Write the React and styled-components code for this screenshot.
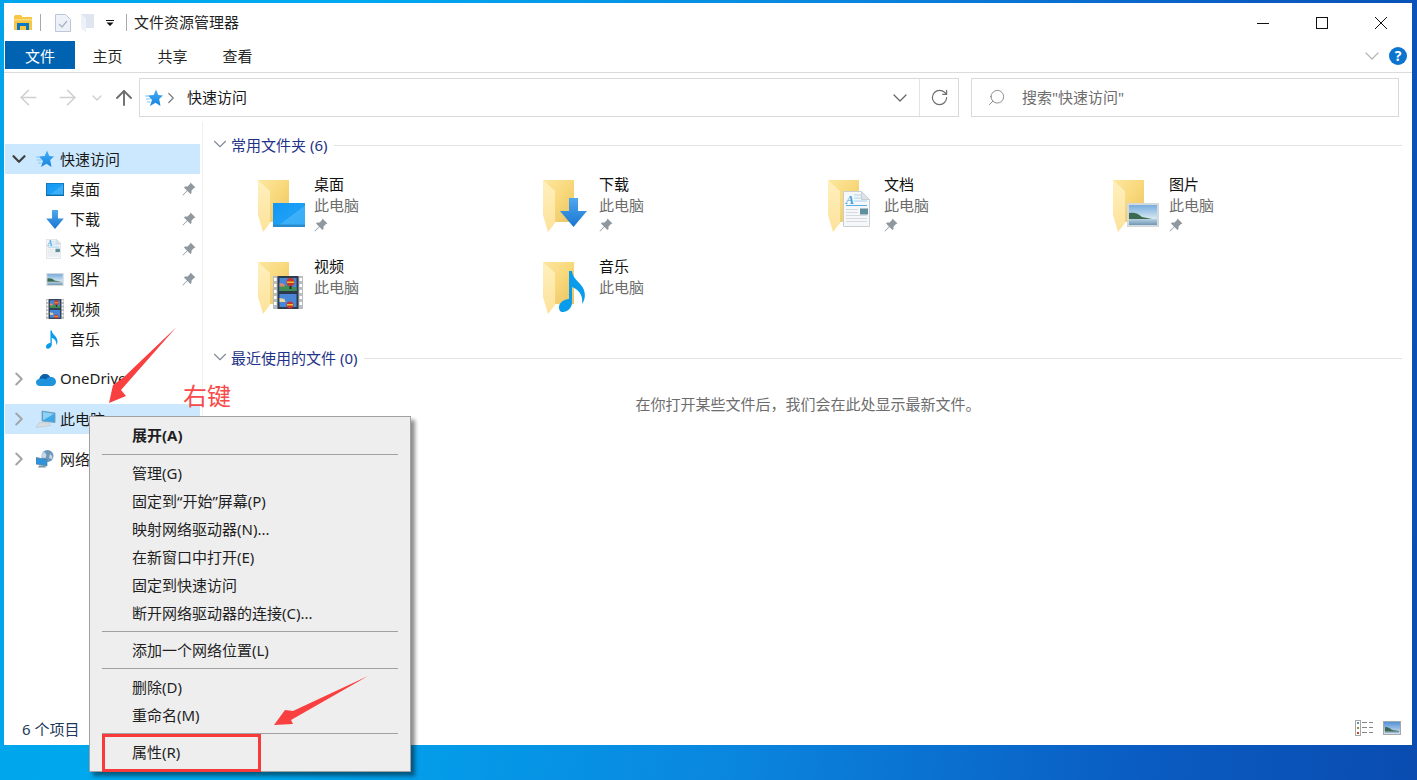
import React from 'react';
import styled, { createGlobalStyle } from 'styled-components';
import { ArrowLeft, ArrowRight, ArrowUp, ChevronDown, ChevronRight, RotateCw, Search } from 'lucide-react';

const GlobalStyle = createGlobalStyle`
  html, body {
    margin: 0;
    padding: 0;
    overflow: hidden;
  }
  * {
    box-sizing: border-box;
  }
  svg {
    flex: none;
  }
  body {
    font-family: "Noto Sans", "Noto Sans CJK SC", sans-serif;
    font-size: 15px;
    color: #1a1a1a;
  }
`;

const Desktop = styled.div`
  position: relative;
  width: 1417px;
  height: 780px;
  padding: 3px 5px 35px 4px;
  background: linear-gradient(98deg, #00a4ea 0%, #00aaf0 22%, #0a86de 55%, #0a5cc2 82%, #0a4cb0 100%);
`;

const Window = styled.div`
  display: flex;
  flex-direction: column;
  height: 100%;
  background: #fff;
`;

const TitleBar = styled.div`
  display: flex;
  align-items: center;
  height: 37px;
  padding: 2px 2px 0 10px;
  flex: none;
`;

const QuickSep = styled.span`
  width: 1px;
  height: 17px;
  background: #a9a9a9;
  margin: ${({ $margin }) => $margin};
`;

const TitleText = styled.span`
  line-height: 20px;
  margin-bottom: 2px;
  color: #1f1f1f;
`;

const WindowButtons = styled.div`
  display: flex;
  margin-left: auto;
`;

const WindowButton = styled.div`
  display: flex;
  align-items: center;
  justify-content: center;
  width: 59px;
  height: 30px;
`;

const RibbonTabs = styled.div`
  display: flex;
  align-items: flex-start;
  height: 33px;
  padding: 1px 5px 0 1px;
  border-bottom: 1px solid #dadbdc;
  flex: none;
`;

const Tab = styled.div`
  display: flex;
  align-items: center;
  justify-content: center;
  width: ${({ $active }) => ($active ? '70px' : '65px')};
  height: 28px;
  background: ${({ $active }) => ($active ? '#0063b1' : 'transparent')};
  color: ${({ $active }) => ($active ? '#fff' : '#262626')};
`;

const RibbonRight = styled.div`
  display: flex;
  align-items: center;
  gap: 5px;
  margin-left: auto;
  height: 30px;
`;

const HelpBadge = styled.span`
  display: flex;
  align-items: center;
  justify-content: center;
  width: 18px;
  height: 18px;
  border-radius: 50%;
  background: #0a74ce;
  color: #fff;
  font-size: 14px;
  font-weight: 700;
  line-height: 18px;
`;

const NavBar = styled.div`
  display: flex;
  align-items: center;
  height: 49px;
  padding: 5px 13px 5px 0;
  flex: none;
`;

const NavButtons = styled.div`
  display: flex;
  align-items: center;
  width: 135px;
  flex: none;
`;

const NavSlot = styled.span`
  display: flex;
  align-items: center;
  justify-content: center;
  flex: none;
  width: ${({ $w }) => $w}px;
  margin-left: ${({ $ml }) => $ml || 0}px;
`;

const AddressBox = styled.div`
  display: flex;
  align-items: center;
  flex: 1;
  height: 39px;
  border: 1px solid #d9d9d9;
  padding-left: 5px;
`;

const Crumb = styled.span`
  color: #1a1a1a;
  margin: 0 0 2px 10px;
`;

const AddressEnd = styled.div`
  display: flex;
  align-items: center;
  margin-left: auto;
  height: 100%;
`;

const AddressSep = styled.span`
  width: 1px;
  height: 100%;
  background: #e3e3e3;
`;

const SearchBox = styled.div`
  display: flex;
  align-items: center;
  width: 428px;
  height: 39px;
  margin-left: 12px;
  padding-left: 15px;
  border: 1px solid #d9d9d9;
  color: #6d6d6d;
`;

const SearchText = styled.span`
  margin: 0 0 2px 16px;
`;

const Body = styled.div`
  display: flex;
  flex: 1;
  min-height: 0;
`;

const Sidebar = styled.nav`
  width: 199px;
  flex: none;
  padding: 22px 2px 0 1px;
  border-right: 1px solid #f0f0f0;
`;

const TreeGroup = styled.div`
  margin-top: ${({ $first }) => ($first ? '0' : '10px')};
`;

const TreeRow = styled.div`
  display: flex;
  align-items: center;
  height: 30px;
  padding-left: ${({ $child }) => ($child ? '41px' : '0')};
  padding-right: 4px;
  background: ${({ $selected }) => ($selected ? '#cce8ff' : 'transparent')};
  color: #1a1a1a;
`;

const TreeLabel = styled.span`
  margin-bottom: 2px;
`;

const Toggle = styled.span`
  display: flex;
  align-items: center;
  justify-content: center;
  width: 27px;
  flex: none;
`;

const TreeIcon = styled.span`
  display: flex;
  align-items: center;
  flex: none;
  width: ${({ $child }) => ($child ? '24px' : '28px')};
  padding-left: ${({ $child }) => ($child ? '0' : '4px')};
`;

const PinSlot = styled.span`
  display: flex;
  margin-left: auto;
`;

const Content = styled.main`
  flex: 1;
  min-width: 0;
  padding: 12px 10px 0 11px;
`;

const SectionHead = styled.div`
  display: flex;
  align-items: center;
  height: 20px;
  margin-top: ${({ $mt }) => $mt || 0}px;
  color: #1e3287;
`;

const SectionChevron = styled.span`
  display: flex;
  justify-content: center;
  width: 12px;
  margin-right: 5px;
  flex: none;
`;

const SectionLine = styled.span`
  flex: 1;
  height: 1px;
  margin: 2px 0 0 7px;
  background: #e2e2e2;
`;

const FolderGrid = styled.div`
  display: grid;
  grid-template-columns: repeat(4, 285px);
  grid-auto-rows: 82px;
  margin-top: 20px;
  padding-left: 29px;
`;

const FolderItem = styled.div`
  display: flex;
`;

const FolderThumb = styled.div`
  position: relative;
  width: 48px;
  height: 52px;
  margin: 6px 8px 0 15px;
  flex: none;
`;

const FolderBadge = styled.div`
  position: absolute;
  left: ${({ $x }) => $x}px;
  top: ${({ $y }) => $y}px;
  display: flex;
`;

const FolderText = styled.div`
  display: flex;
  flex-direction: column;
  line-height: 21px;
`;

const FolderName = styled.span`
  color: #111;
`;

const FolderSub = styled.span`
  color: #6d6d6d;
`;

const FolderPin = styled.span`
  display: flex;
  margin-top: 2px;
`;

const EmptyNote = styled.div`
  margin-top: 27px;
  text-align: center;
  line-height: 21px;
  color: #6d6d6d;
`;

const StatusBar = styled.div`
  display: flex;
  align-items: center;
  height: 30px;
  padding: 0 11px 4px 18px;
  flex: none;
  color: #1e395b;
`;

const StatusViews = styled.div`
  display: flex;
  align-items: center;
  gap: 10px;
  margin-left: auto;
`;

const ContextMenu = styled.div`
  position: absolute;
  left: 89px;
  top: 416px;
  width: 322px;
  padding: 4px 12px 6px 1px;
  background: #eeeeee;
  border: 1px solid #a0a0a0;
  box-shadow: 4px 4px 4px rgba(0, 0, 0, 0.45);
`;

const MenuItem = styled.div`
  display: flex;
  align-items: center;
  height: 28px;
  padding-left: 41px;
  padding-bottom: ${({ $bold }) => ($bold ? '2px' : '0')};
  color: #1f1f1f;
  font-weight: ${({ $bold }) => ($bold ? 700 : 400)};
  white-space: nowrap;
`;

const MenuSep = styled.div`
  height: 1px;
  margin: 5px 0 3px 11px;
  background: #a0a0a0;
`;

const Annotations = styled.svg`
  position: absolute;
  left: 0;
  top: 0;
  pointer-events: none;
`;

const RedLabel = styled.div`
  position: absolute;
  left: 183px;
  top: 377px;
  font-family: "Noto Sans CJK SC", sans-serif;
  font-size: 24px;
  line-height: 36px;
  color: #f94a4a;
`;

const RedBox = styled.div`
  position: absolute;
  left: 102px;
  top: 734px;
  width: 159px;
  height: 38px;
  border: 3px solid #f93a3a;
`;

const AppFolderIcon = () => (
  <svg width="18" height="16" viewBox="0 0 18 16">
    <path d="M0 1.500 1 0h6l1.500 2H18v13H0Z" fill="#f6c644" />
    <path d="M0 4h18v1.500H0Z" fill="#fbdd80" />
    <path d="M3 15V8h12v7h-3v-4H6v4Z" fill="#0a76c4" />
  </svg>
);

const QuickCheckIcon = () => (
  <svg width="16" height="18" viewBox="0 0 16 18">
    <path d="M.5.5h10l5 5v12H.5Z" fill="#eef2f8" stroke="#bcc8da" />
    <path d="m4 10 3 3 5-6" fill="none" stroke="#a9b5c6" strokeWidth="1.400" />
  </svg>
);

const QuickFolderIcon = () => (
  <svg width="13" height="18" viewBox="0 0 13 18">
    <path d="M0 0h13v14H5v4L0 14Z" fill="#dfe6f1" />
    <path d="M0 0 5 4v14L0 14Z" fill="#eef2f8" />
  </svg>
);

const QuickDropIcon = () => (
  <svg width="8" height="6" viewBox="0 0 8 6">
    <path d="M0 0h8v1H0ZM.5 2.500h7L4 6Z" fill="#111" />
  </svg>
);

const MinimizeIcon = () => (
  <svg width="12" height="12" viewBox="0 0 12 12">
    <path d="M0 6.500h12" stroke="#111" />
  </svg>
);

const MaximizeIcon = () => (
  <svg width="12" height="12" viewBox="0 0 12 12">
    <rect x=".5" y=".5" width="11" height="11" fill="none" stroke="#111" />
  </svg>
);

const CloseIcon = () => (
  <svg width="12" height="12" viewBox="0 0 12 12">
    <path d="M0 0l12 12M12 0 0 12" stroke="#111" />
  </svg>
);

const StarIcon = () => (
  <svg width="18" height="18" viewBox="0 0 18 18">
    <defs>
      <linearGradient id="starFill" x1="0" y1="0" x2="0" y2="1">
        <stop offset="0" stopColor="#45b0f8" />
        <stop offset="1" stopColor="#1583de" />
      </linearGradient>
    </defs>
    <path d="M11 .5 13.300 6l4.700.4-3.800 3.600 1.300 7-5-3.300L5 17l2-6-4-4.400L8.700 6Z" fill="url(#starFill)" />
    <path d="M0 7h4M1 10h4.500M2 13h3.500" stroke="#7cc7f7" strokeWidth="1.200" />
  </svg>
);

const PinIcon = () => (
  <svg width="14" height="14" viewBox="0 0 14 14">
    <path d="M8.500.5l5 5-1.500.5-2.500 2.500V11l-1 1-3-3-4.500 4.500L.5 13 5 8.500l-3-3 1-1h2.500L8 2Z" fill="#8f989f" />
  </svg>
);

const DesktopIcon = ({ width = 18, height = 13, outline }) => (
  <svg width={width} height={height} viewBox="0 0 32 24">
    <defs>
      <linearGradient id="deskFill" x1="0" y1="0" x2="1" y2="1">
        <stop offset="0" stopColor="#1196f3" />
        <stop offset="0.55" stopColor="#1ea0f6" />
        <stop offset="0.56" stopColor="#3cb0f8" />
        <stop offset="1" stopColor="#35adf7" />
      </linearGradient>
    </defs>
    <rect width="32" height="24" fill="url(#deskFill)" stroke={outline ? '#0d6aa8' : 'none'} strokeWidth={outline ? 2 : 0} />
    <rect y="21.500" width="32" height="2.500" fill={outline ? '#0d6aa8' : '#2a8ccc'} />
  </svg>
);

const DownloadIcon = ({ width = 18, height = 19 }) => (
  <svg width={width} height={height} viewBox="0 0 27 29">
    <defs>
      <linearGradient id="downFill" x1="0" y1="0" x2="0" y2="1">
        <stop offset="0" stopColor="#4fa8ef" />
        <stop offset="1" stopColor="#1a75cf" />
      </linearGradient>
    </defs>
    <path d="M9 0h9v13h9L13.500 29 0 13h9Z" fill="url(#downFill)" />
  </svg>
);

const DocIcon = ({ width = 15, height = 20 }) => (
  <svg width={width} height={height} viewBox="0 0 27 36">
    <path d="M.5.5h18l8 8v27H.5Z" fill="#f5f7f9" stroke="#c9ced3" />
    <path d="M18.500.5v8h8Z" fill="#dfe3e7" stroke="#c9ced3" />
    <text x="2.500" y="12.500" fontFamily="Liberation Serif, serif" fontStyle="italic" fontWeight="700" fontSize="13" fill="#3f9fe0">A</text>
    <path d="M11 4h7M11 7h8M11 10h13" stroke="#a9d2ee" />
    <path d="M3 14.500h21" stroke="#56aee6" />
    <path d="M3 18.500h12M3 21.500h12M3 24.500h21M3 27.500h21M3 30.500h21" stroke="#d5dade" />
    <rect x="17" y="17.500" width="8" height="6" fill="#5f8f9c" />
  </svg>
);

const PictureIcon = ({ width = 18, height = 13 }) => (
  <svg width={width} height={height} viewBox="0 0 32 24">
    <defs>
      <linearGradient id="skyFill" x1="0" y1="0" x2="0" y2="1">
        <stop offset="0" stopColor="#6fa8dc" />
        <stop offset="0.7" stopColor="#dcecf4" />
      </linearGradient>
      <linearGradient id="waterFill" x1="0" y1="0" x2="0" y2="1">
        <stop offset="0" stopColor="#b9d0de" />
        <stop offset="1" stopColor="#6f98b8" />
      </linearGradient>
    </defs>
    <rect x="1" y="1" width="30" height="22" fill="url(#skyFill)" stroke="#d5d9dc" strokeWidth="2" />
    <path d="M2 10c5-1 9 0 13 4 5 1 10 2 15 3H2Z" fill="#3a6a50" />
    <rect x="2" y="16" width="28" height="6" fill="url(#waterFill)" />
  </svg>
);

const FilmIcon = ({ width = 18, height = 20 }) => (
  <svg width={width} height={height} viewBox="0 0 30 33">
    <rect width="30" height="33" fill="#b9bdbf" />
    <rect x="4.500" width="21" height="33" fill="#2c3a4c" />
    <path d="M1 2h2.500v3H1ZM1 8h2.500v3H1ZM1 14h2.500v3H1ZM1 20h2.500v3H1ZM1 26h2.500v3H1ZM26.500 2H29v3h-2.500ZM26.500 8H29v3h-2.500ZM26.500 14H29v3h-2.500ZM26.500 20H29v3h-2.500ZM26.500 26H29v3h-2.500Z" fill="#fff" />
    <rect x="6.500" y="2" width="17" height="13" fill="#4a86d8" />
    <rect x="6.500" y="18" width="17" height="13" fill="#4a86d8" />
    <path d="M6.500 10.500 12 9l11.500 2.500V15h-17Z" fill="#3f8f55" />
    <path d="M6.500 7 11 8l1 2.500H6.500Z" fill="#d98a70" />
    <circle cx="17.500" cy="6" r="4" fill="#c9332b" />
    <path d="M14 5.500h7V7h-7Z" fill="#e8c030" />
    <path d="M16.500 10h2v3h-2Z" fill="#2c2c2c" />
    <circle cx="17" cy="29" r="3.500" fill="#c9332b" />
    <path d="M14 28h6v1.500h-6Z" fill="#e8c030" />
    <path d="M6.500 22l5 1 1 3h-6Z" fill="#e7d9a0" />
  </svg>
);

const NoteIcon = ({ width = 12, height = 19 }) => (
  <svg width={width} height={height} viewBox="0 0 27 42">
    <path d="M10 1h3c1 7 5 9 9 14 5 6 5 14 1 19 1-7-1-13-10-17v16c0 5-5 9-9 9-3 0-4-2-4-5 0-4 5-8 10-8Z" fill="#0a9cec" />
  </svg>
);

const OneDriveIcon = () => (
  <svg width="20" height="13" viewBox="0 0 20 13">
    <path d="M4 13C1.500 13 0 11.300 0 9.400 0 7.500 1.400 6 3.300 6 4 3 6.300 1 9 1c2.200 0 4 1.200 5 3 3-.5 6 1.500 6 4.800 0 2.500-2 4.200-4.200 4.200Z" fill="#1f94dc" />
    <path d="M3.300 6C4 3 6.300 1 9 1c2.200 0 4 1.200 5 3-2 .2-3.300 1.100-4 2.500-2.500-1.300-4.800-1-6.700-.5Z" fill="#0f5fa8" />
  </svg>
);

const ComputerIcon = () => (
  <svg width="20" height="18" viewBox="0 0 20 18">
    <path d="M6 1l13 2v9.500L6 11Z" fill="#3fa9e8" stroke="#7d97a8" strokeWidth=".8" />
    <path d="M7 2l11 1.800L8 9.800l-1-.1Z" fill="#8fd0f5" />
    <path d="M3 12.500l10 .5 1.500 2.500L0 17.500Z" fill="#d8dde0" stroke="#bcc3c8" strokeWidth=".6" />
  </svg>
);

const NetworkIcon = () => (
  <svg width="18" height="18" viewBox="0 0 18 18">
    <circle cx="11.500" cy="6" r="6" fill="#6d97b8" />
    <path d="M8 2c2 1 3 3 2 5s-3 1-4 0 0-4 2-5ZM14 4c2 1 3 3 2 5l-3-1Z" fill="#c7d9e6" />
    <path d="M0 7.500 11 9.500V16L0 14Z" fill="#2d93dc" stroke="#5a7f9a" strokeWidth=".7" />
    <path d="M3 15.500h6l1 2H2Z" fill="#7b96a8" />
  </svg>
);

const DetailsViewIcon = () => (
  <svg width="18" height="16" viewBox="0 0 18 16">
    <rect x=".5" y=".5" width="5" height="15" fill="#fff" stroke="#a7a7a7" />
    <rect x="2" y="2" width="2" height="2" fill="#5f93a8" />
    <rect x="2" y="7" width="2" height="2" fill="#8f8f40" />
    <rect x="2" y="12" width="2" height="2" fill="#b5492f" />
    <path d="M7 2.500h5M14 2.500h4M7 7.500h5M14 7.500h4M7 12.500h5M14 12.500h4" stroke="#858585" />
  </svg>
);

const LargeViewIcon = () => (
  <svg width="18" height="14" viewBox="0 0 18 14">
    <defs>
      <linearGradient id="viewSky" x1="0" y1="0" x2="0" y2="1">
        <stop offset="0" stopColor="#4f8fd6" />
        <stop offset="1" stopColor="#d4e6f2" />
      </linearGradient>
    </defs>
    <rect x=".5" y=".5" width="17" height="13" fill="url(#viewSky)" stroke="#a7a7a7" />
    <path d="M2 6c3 0 5 1 7 3l7 1v2H2Z" fill="#41664f" />
    <path d="M2 10.500h14V12H2Z" fill="#9ab8cc" />
  </svg>
);

const FolderIcon = () => (
  <svg width="32" height="52" viewBox="0 0 32 52">
    <defs>
      <linearGradient id="folderBack" x1="0" y1="0" x2="1" y2="1">
        <stop offset="0" stopColor="#fce6a0" />
        <stop offset="0.5" stopColor="#f8d87a" />
        <stop offset="1" stopColor="#e9c262" />
      </linearGradient>
      <linearGradient id="folderFlap" x1="0" y1="0" x2="0" y2="1">
        <stop offset="0" stopColor="#fff0bd" />
        <stop offset="1" stopColor="#fde29a" />
      </linearGradient>
    </defs>
    <path d="M0 0h31v42H12Z" fill="url(#folderBack)" />
    <path d="M0 0l12 11v32l-7 9-5-17Z" fill="url(#folderFlap)" />
  </svg>
);

const navItems = [
  { label: '桌面', icon: <DesktopIcon outline />, pin: true },
  { label: '下载', icon: <DownloadIcon />, pin: true },
  { label: '文档', icon: <DocIcon />, pin: true },
  { label: '图片', icon: <PictureIcon />, pin: true },
  { label: '视频', icon: <FilmIcon /> },
  { label: '音乐', icon: <NoteIcon /> },
];

const folders = [
  { name: '桌面', pin: true, x: 15, y: 23, badge: <DesktopIcon width={32} height={24} /> },
  { name: '下载', pin: true, x: 17, y: 18, badge: <DownloadIcon width={27} height={29} /> },
  { name: '文档', pin: true, x: 15, y: 11, badge: <DocIcon width={27} height={36} /> },
  { name: '图片', pin: true, x: 14, y: 23, badge: <PictureIcon width={32} height={24} /> },
  { name: '视频', x: 15, y: 14, badge: <FilmIcon width={30} height={33} /> },
  { name: '音乐', x: 16, y: 8, badge: <NoteIcon width={27} height={42} /> },
];

const App = () => (
  <Desktop>
    <GlobalStyle />
    <Window>
      <TitleBar>
        <AppFolderIcon />
        <QuickSep $margin="0 14px 0 8px" />
        <QuickCheckIcon />
        <NavSlot $w={13} $ml={10}><QuickFolderIcon /></NavSlot>
        <NavSlot $w={8} $ml={12}><QuickDropIcon /></NavSlot>
        <QuickSep $margin="0 7px 0 12px" />
        <TitleText>文件资源管理器</TitleText>
        <WindowButtons>
          <WindowButton><MinimizeIcon /></WindowButton>
          <WindowButton><MaximizeIcon /></WindowButton>
          <WindowButton><CloseIcon /></WindowButton>
        </WindowButtons>
      </TitleBar>
      <RibbonTabs>
        <Tab $active>文件</Tab>
        <Tab>主页</Tab>
        <Tab>共享</Tab>
        <Tab>查看</Tab>
        <RibbonRight>
          <ChevronDown size={24} color="#b5b5b5" strokeWidth={1.2} />
          <HelpBadge>?</HelpBadge>
        </RibbonRight>
      </RibbonTabs>
      <NavBar>
        <NavButtons>
          <NavSlot $w={17} $ml={16}><ArrowLeft size={25} color="#cfcfcf" strokeWidth={1.5} /></NavSlot>
          <NavSlot $w={17} $ml={22}><ArrowRight size={25} color="#cfcfcf" strokeWidth={1.5} /></NavSlot>
          <NavSlot $w={11} $ml={15}><ChevronDown size={16} color="#cfcfcf" strokeWidth={2} /></NavSlot>
          <NavSlot $w={17} $ml={13}><ArrowUp size={24} color="#6e6e6e" strokeWidth={1.9} /></NavSlot>
        </NavButtons>
        <AddressBox>
          <StarIcon />
          <NavSlot $w={12} $ml={2}><ChevronRight size={18} color="#7d7d7d" strokeWidth={1.6} /></NavSlot>
          <Crumb>快速访问</Crumb>
          <AddressEnd>
            <NavSlot $w={39}><ChevronDown size={24} color="#666" strokeWidth={1.3} /></NavSlot>
            <AddressSep />
            <NavSlot $w={38}><RotateCw size={19} color="#6e6e6e" strokeWidth={1.5} /></NavSlot>
          </AddressEnd>
        </AddressBox>
        <SearchBox>
          <Search size={19} color="#808080" strokeWidth={1.1} style={{ transform: 'scaleX(-1)' }} />
          <SearchText>搜索"快速访问"</SearchText>
        </SearchBox>
      </NavBar>
      <Body>
        <Sidebar>
          <TreeGroup $first>
            <TreeRow $selected>
              <Toggle><ChevronDown size={22} color="#3f3f3f" strokeWidth={2.4} /></Toggle>
              <TreeIcon><StarIcon /></TreeIcon>
              <TreeLabel>快速访问</TreeLabel>
            </TreeRow>
            {navItems.map((item) => (
              <TreeRow $child key={item.label}>
                <TreeIcon $child>{item.icon}</TreeIcon>
                <TreeLabel>{item.label}</TreeLabel>
                {item.pin && <PinSlot><PinIcon /></PinSlot>}
              </TreeRow>
            ))}
          </TreeGroup>
          <TreeGroup>
            <TreeRow>
              <Toggle><ChevronRight size={22} color="#a6a6a6" strokeWidth={2.2} /></Toggle>
              <TreeIcon><OneDriveIcon /></TreeIcon>
              <TreeLabel>OneDrive</TreeLabel>
            </TreeRow>
          </TreeGroup>
          <TreeGroup>
            <TreeRow $selected>
              <Toggle><ChevronRight size={22} color="#a6a6a6" strokeWidth={2.2} /></Toggle>
              <TreeIcon><ComputerIcon /></TreeIcon>
              <TreeLabel>此电脑</TreeLabel>
            </TreeRow>
          </TreeGroup>
          <TreeGroup>
            <TreeRow>
              <Toggle><ChevronRight size={22} color="#a6a6a6" strokeWidth={2.2} /></Toggle>
              <TreeIcon><NetworkIcon /></TreeIcon>
              <TreeLabel>网络</TreeLabel>
            </TreeRow>
          </TreeGroup>
        </Sidebar>
        <Content>
          <SectionHead>
            <SectionChevron><ChevronDown size={22} color="#808a96" strokeWidth={1.2} /></SectionChevron>
            常用文件夹 (6)
            <SectionLine />
          </SectionHead>
          <FolderGrid>
            {folders.map((folder) => (
              <FolderItem key={folder.name}>
                <FolderThumb>
                  <FolderIcon />
                  <FolderBadge $x={folder.x} $y={folder.y}>{folder.badge}</FolderBadge>
                </FolderThumb>
                <FolderText>
                  <FolderName>{folder.name}</FolderName>
                  <FolderSub>此电脑</FolderSub>
                  {folder.pin && <FolderPin><PinIcon /></FolderPin>}
                </FolderText>
              </FolderItem>
            ))}
          </FolderGrid>
          <SectionHead $mt={9}>
            <SectionChevron><ChevronDown size={22} color="#808a96" strokeWidth={1.2} /></SectionChevron>
            最近使用的文件 (0)
            <SectionLine />
          </SectionHead>
          <EmptyNote>在你打开某些文件后，我们会在此处显示最新文件。</EmptyNote>
        </Content>
      </Body>
      <StatusBar>
        6 个项目
        <StatusViews>
          <DetailsViewIcon />
          <LargeViewIcon />
        </StatusViews>
      </StatusBar>
    </Window>
    <ContextMenu>
      <MenuItem $bold>展开(A)</MenuItem>
      <MenuSep />
      <MenuItem>管理(G)</MenuItem>
      <MenuItem>固定到“开始”屏幕(P)</MenuItem>
      <MenuItem>映射网络驱动器(N)...</MenuItem>
      <MenuItem>在新窗口中打开(E)</MenuItem>
      <MenuItem>固定到快速访问</MenuItem>
      <MenuItem>断开网络驱动器的连接(C)...</MenuItem>
      <MenuSep />
      <MenuItem>添加一个网络位置(L)</MenuItem>
      <MenuSep />
      <MenuItem>删除(D)</MenuItem>
      <MenuItem>重命名(M)</MenuItem>
      <MenuSep />
      <MenuItem>属性(R)</MenuItem>
    </ContextMenu>
    <RedLabel>右键</RedLabel>
    <RedBox />
    <Annotations width="1417" height="780" viewBox="0 0 1417 780">
      <path d="M176.500 327 124 377l-11 8-4 18 17-7-5-6Z" fill="#f93f3f" />
      <path d="M368 676 293 711l-8-1-11 15 19-1-2-4Z" fill="#f93f3f" />
    </Annotations>
  </Desktop>
);

export default App;
